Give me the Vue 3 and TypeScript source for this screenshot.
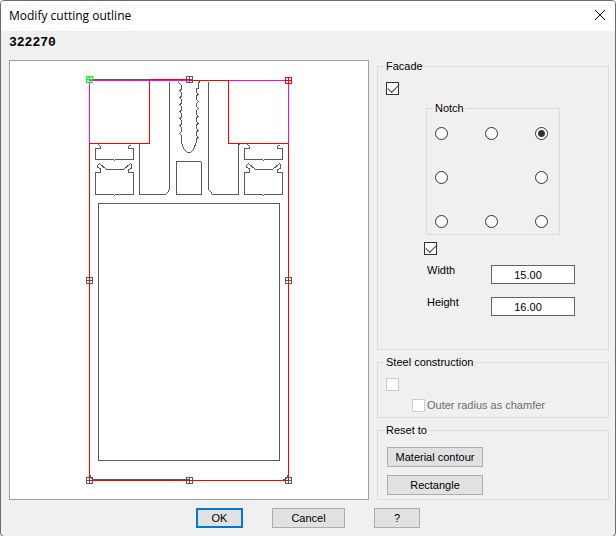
<script setup lang="ts">
import { ref } from 'vue'

type Position = 'tl' | 'tc' | 'tr' | 'ml' | 'mr' | 'bl' | 'bc' | 'br'

const positions: { id: Position; label: string }[] = [
  { id: 'tl', label: 'Top left' },
  { id: 'tc', label: 'Top centre' },
  { id: 'tr', label: 'Top right' },
  { id: 'ml', label: 'Middle left' },
  { id: 'mr', label: 'Middle right' },
  { id: 'bl', label: 'Bottom left' },
  { id: 'bc', label: 'Bottom centre' },
  { id: 'br', label: 'Bottom right' },
]

const facade = ref(true)
const notch = ref<Position>('tr')
const notchSize = ref(true)
const width = ref('15.00')
const height = ref('16.00')
const steel = ref(false)
const chamfer = ref(false)

// Grip points below the outline and those above it
const handles = [
  { x: 189, y: 79 },
  { x: 89, y: 280 },
  { x: 288, y: 280 },
  { x: 89, y: 480 },
  { x: 189, y: 480 },
  { x: 288, y: 480 },
]
const cornerHandles = [
  { x: 89, y: 79, tone: 'green' },
  { x: 288, y: 80, tone: 'red' },
]
const gripPath = 'M-3-3H3V3H-3ZM-3 0H3M0-3V3'
</script>

<template>
  <main class="dialog">
    <header class="titlebar">
      <h1>Modify cutting outline</h1>
      <button type="button" class="close" aria-label="Close">
        <svg width="12" height="12" viewBox="0 0 12 12"><path d="M1 1 11 11M11 1 1 11" /></svg>
      </button>
    </header>

    <p class="article">322270</p>

    <div class="content">
      <div class="canvas">
        <svg viewBox="9.5 60.5 358 438" role="img" aria-label="Profile section">
          <g class="profile">
            <path d="M89 79H189M98 203H279V460H98Z" />
            <path d="M138 144H139V194H165L167 192L169 189V81" />
            <path d="M239 144H238V194H212L210 191L208 189V81" />
            <path d="M176 161H200L201 162V194H176Z" />
            <path
              d="M178 81V82L181 85V89L179 90L181 92V96L179 97L181 99V103L179 104L181 106V110L179 111L181 113V117L179 118L181 120V124L179 125L181 127V131L179 133L181 135V142L183 148L187 152H190L193 149L196 141V138L198 137L196 135V131L198 130L196 128V124L198 123L196 121V117L198 116L196 114V110L198 108L196 106V103L198 101L196 99V95L198 94L196 92V88H198V83L199 81"
            />
            <g v-for="x in [0, 149]" :key="x" :transform="`translate(${x} 0)`">
              <path d="M98 144 100 146V148H95V159H113L114 160L115 159H133V148H128V146L131 144" />
              <path
                d="M106 169 99 163 97 165V167L100 168V172H95V194H113L114 195L115 194H133V172H128V169L131 168V164L130 163L123 169Z"
              />
            </g>
            <path d="M90 474V477L92 479H189M287 474V477L285 479H282" />
            <path
              v-for="h in handles"
              :key="`${h.x}-${h.y}`"
              :d="gripPath"
              :transform="`translate(${h.x} ${h.y})`"
            />
          </g>
          <path class="magenta" d="M89 143V80H288V143" />
          <path class="red" d="M149 79H189M189 80H228V143H288V480H89V143H149V80" />
          <path
            v-for="h in cornerHandles"
            :key="h.tone"
            :class="h.tone"
            :d="gripPath"
            :transform="`translate(${h.x} ${h.y})`"
          />
        </svg>
      </div>

      <div class="settings">
        <fieldset class="group facade">
          <legend>Facade</legend>
          <input v-model="facade" type="checkbox" aria-label="Facade" />
          <fieldset class="group notch">
            <legend>Notch</legend>
            <input
              v-for="p in positions"
              :key="p.id"
              v-model="notch"
              type="radio"
              name="notch"
              :class="p.id"
              :value="p.id"
              :aria-label="p.label"
            />
          </fieldset>
          <input v-model="notchSize" class="size-toggle" type="checkbox" aria-label="Notch size" />
          <div class="sizes">
            <label for="width">Width</label>
            <input id="width" v-model="width" type="text" />
            <label for="height">Height</label>
            <input id="height" v-model="height" type="text" />
          </div>
        </fieldset>

        <fieldset class="group steel">
          <legend>Steel construction</legend>
          <input v-model="steel" type="checkbox" disabled aria-label="Steel construction" />
          <label class="chamfer">
            <input v-model="chamfer" type="checkbox" disabled />
            Outer radius as chamfer
          </label>
        </fieldset>

        <fieldset class="group reset">
          <legend>Reset to</legend>
          <button type="button" class="btn">Material contour</button>
          <button type="button" class="btn">Rectangle</button>
        </fieldset>
      </div>
    </div>

    <footer class="actions">
      <button type="button" class="btn ok">OK</button>
      <button type="button" class="btn cancel">Cancel</button>
      <button type="button" class="btn help">?</button>
    </footer>
  </main>
</template>

<style>
body {
  margin: 0;
  background: #fff;
}
</style>

<style scoped>
* {
  box-sizing: border-box;
}

.dialog {
  display: flex;
  flex-direction: column;
  min-height: 100vh;
  border: 1px solid #6b6b6b;
  border-radius: 4px;
  overflow: hidden;
  background: #f0f0f0;
  color: #000;
  font: 11px/13px 'Liberation Sans', Arial, sans-serif;
}

.titlebar {
  display: flex;
  align-items: center;
  justify-content: space-between;
  height: 30px;
  padding: 0 9px 0 8px;
  background: #fff;
}

.titlebar h1 {
  margin: 0;
  font: 12px/16px 'Open Sans', 'Noto Sans', sans-serif;
}

.close {
  display: flex;
  padding: 0 0 2px;
  border: 0;
  background: none;
}

.close path {
  stroke: #111;
  fill: none;
}

.article {
  margin: 0;
  padding: 4px 8px 9px;
  font: bold 13px/16px 'Liberation Mono', monospace;
}

.content {
  display: grid;
  grid-template-columns: minmax(0, 1fr) 232px;
  gap: 8px;
  padding: 0 6px 0 8px;
}

.canvas {
  border: 1px solid #a0a0a0;
  background: #fff;
}

.canvas svg {
  display: block;
  width: 100%;
  fill: none;
}

.canvas path {
  shape-rendering: crispEdges;
}

.profile {
  stroke: #5a5a5a;
}

.magenta {
  stroke: #f0f;
}

.red {
  stroke: #f00;
}

.green {
  stroke: #0f0;
}

.settings {
  display: flex;
  flex-direction: column;
  gap: 6px;
}

.group {
  min-width: 0;
  margin: 0;
  border: 1px solid #dcdcdc;
}

.group legend {
  margin-left: -2px;
  padding: 0 2px;
}

.facade {
  flex: 1;
  padding: 9px 8px;
}

.notch {
  display: grid;
  grid-template-columns: repeat(3, 13px);
  grid-template-areas: 'tl tc tr' 'ml . mr' 'bl bc br';
  gap: 31px 37px;
  width: 134px;
  margin: 7px 0 0 40px;
  padding: 12px 8px 6px;
}

.tl { grid-area: tl; }
.tc { grid-area: tc; }
.tr { grid-area: tr; }
.ml { grid-area: ml; }
.mr { grid-area: mr; }
.bl { grid-area: bl; }
.bc { grid-area: bc; }
.br { grid-area: br; }

input[type='checkbox'],
input[type='radio'] {
  display: block;
  flex: none;
  appearance: none;
  width: 13px;
  height: 13px;
  margin: 0;
  border: 1px solid #333;
  background: #fff;
}

input[type='radio'] {
  border-radius: 50%;
}

input[type='radio']:checked {
  background: radial-gradient(circle, #333 3px, #fff 4px);
}

input[type='checkbox']:checked::before {
  content: '';
  display: block;
  width: 10px;
  height: 5px;
  margin: 2px 1px;
  border: solid #444;
  border-width: 0 0 1px 1px;
  transform: translateY(-1px) rotate(-45deg);
}

input[type='checkbox']:disabled {
  border-color: #ccc;
}

.facade > .size-toggle {
  margin: 7px 0 0 38px;
}

.sizes {
  display: grid;
  grid-template-columns: 64px 84px;
  gap: 13px 0;
  margin: 10px 0 0 41px;
}

.sizes label {
  line-height: 11px;
}

.sizes input {
  width: 100%;
  height: 19px;
  padding: 0 10px 0 0;
  border: 1px solid #646464;
  border-radius: 0;
  background: #fff;
  font: inherit;
  text-align: center;
}

.steel {
  height: 62px;
  padding: 9px 8px 0;
}

.chamfer {
  display: flex;
  gap: 2px;
  margin: 8px 0 0 26px;
  color: #6d6d6d;
}

.reset {
  height: 76px;
  padding: 10px 8px 0;
}

.btn {
  height: 20px;
  padding: 0;
  border: 1px solid #adadad;
  border-radius: 0;
  background: #e1e1e1;
  color: #000;
  font: inherit;
}

.reset .btn {
  display: block;
  width: 96px;
  margin: 0 0 8px 1px;
}

.actions {
  display: flex;
  justify-content: center;
  gap: 29px;
  padding: 8px 0;
}

.actions .ok {
  width: 47px;
  border: 2px solid #0078d7;
}

.cancel {
  width: 73px;
}

.help {
  width: 46px;
}
</style>
